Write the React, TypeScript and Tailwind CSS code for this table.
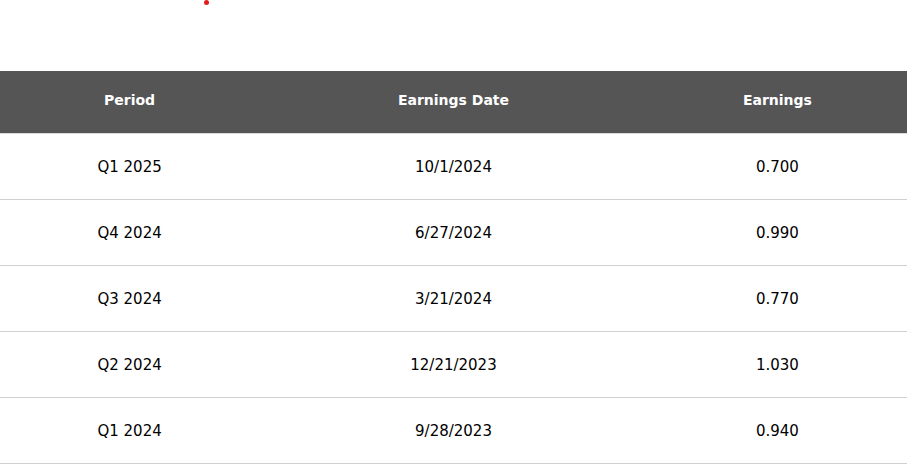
import React from "react";

const rows = [
  ["Q1 2025", "10/1/2024", "0.700"],
  ["Q4 2024", "6/27/2024", "0.990"],
  ["Q3 2024", "3/21/2024", "0.770"],
  ["Q2 2024", "12/21/2023", "1.030"],
  ["Q1 2024", "9/28/2023", "0.940"],
];

export default function App() {
  return (
    <div className="w-[907px] h-[466px] bg-white overflow-hidden" style={{ fontFamily: '"DejaVu Sans", sans-serif' }}>
      <div className="relative h-[71px]">
        <div className="absolute left-[204px] top-0 w-[5px] h-[5px] rounded-full bg-[#e31b1b]" />
      </div>
      <div className="grid grid-cols-[2fr_3fr_2fr] h-[63px] bg-[#555555] border-b border-[#d8d8d8] text-white text-[14px] font-bold items-center text-center">
        <div className="-mt-[3px]">Period</div>
        <div className="-mt-[3px]">Earnings Date</div>
        <div className="-mt-[3px]">Earnings</div>
      </div>
      {rows.map((r) => (
        <div key={r[0]} className="grid grid-cols-[2fr_3fr_2fr] h-[66px] border-b border-[#d0d0d0] items-center text-center text-[15px] text-black">
          <div className="mt-[2px]">{r[0]}</div>
          <div className="mt-[2px]">{r[1]}</div>
          <div className="mt-[2px]">{r[2]}</div>
        </div>
      ))}
    </div>
  );
}
